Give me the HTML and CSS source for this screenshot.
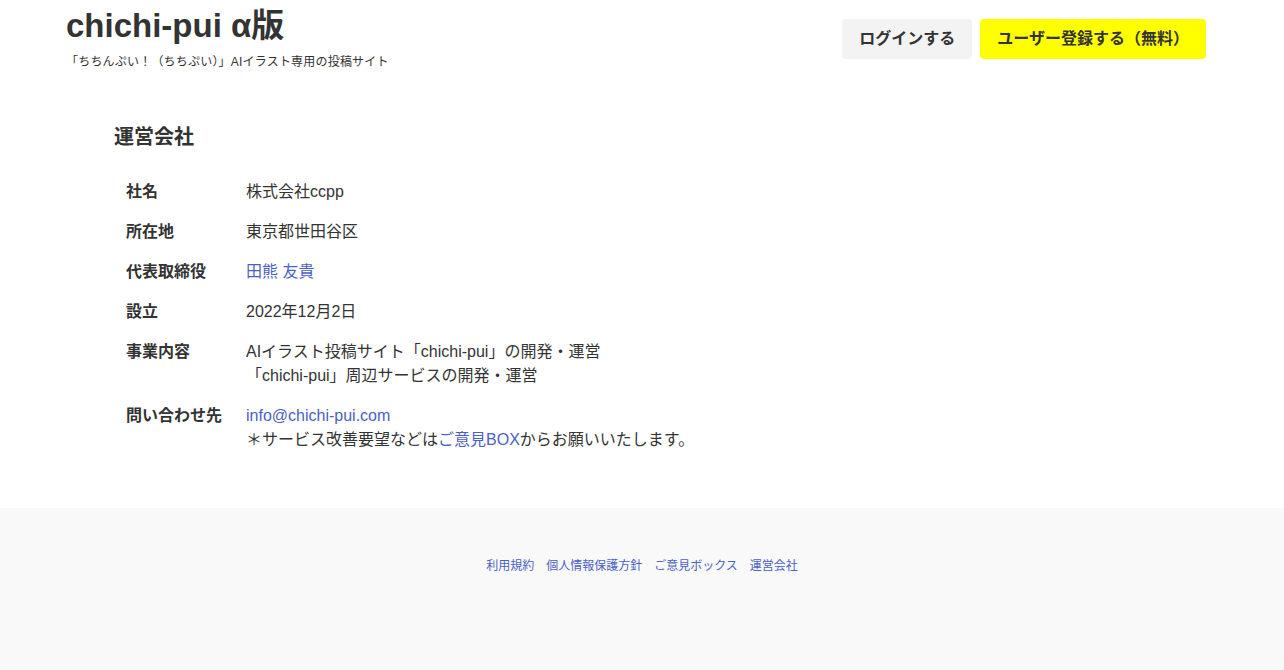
FILE: index.html
```html
<!DOCTYPE html>
<html lang="ja">
<head>
    <meta charset="UTF-8">
    <meta name="viewport" content="width=device-width, initial-scale=1.0">
    <title>運営会社 | chichi-pui</title>
    <link rel="stylesheet" href="styles.css">
</head>
<body>

<header class="site-header">
    <div class="brand">
        <a class="logo" href="#">chichi-pui α版</a>
        <p class="tagline">「ちちんぷい！（ちちぷい）」AIイラスト専用の投稿サイト</p>
    </div>
    <div class="header-actions">
        <a class="btn btn-login" href="#">ログインする</a>
        <a class="btn btn-register" href="#">ユーザー登録する（無料）</a>
    </div>
</header>

<main class="company">
    <h2>運営会社</h2>
    <table class="company-table">
        <tr>
            <th>社名</th>
            <td>株式会社ccpp</td>
        </tr>
        <tr>
            <th>所在地</th>
            <td>東京都世田谷区</td>
        </tr>
        <tr>
            <th>代表取締役</th>
            <td><a href="#">田熊 友貴</a></td>
        </tr>
        <tr>
            <th>設立</th>
            <td>2022年12月2日</td>
        </tr>
        <tr>
            <th>事業内容</th>
            <td>AIイラスト投稿サイト「chichi-pui」の開発・運営<br>「chichi-pui」周辺サービスの開発・運営</td>
        </tr>
        <tr>
            <th>問い合わせ先</th>
            <td><a href="#">info@chichi-pui.com</a><br>＊サービス改善要望などは<a href="#">ご意見BOX</a>からお願いいたします。</td>
        </tr>
    </table>
</main>

<footer class="site-footer">
    <nav class="footer-links">
        <a href="#">利用規約</a>
        <a href="#">個人情報保護方針</a>
        <a href="#">ご意見ボックス</a>
        <a href="#">運営会社</a>
    </nav>
</footer>

</body>
</html>
```

FILE: styles.css
```css
body {
    font-family: "Liberation Sans", Arial, "Noto Sans CJK JP", sans-serif;
    margin: 0;
    color: #333;
    background: #fff;
}
a {
    color: #4b5fc6;
    text-decoration: none;
}
.site-header {
    max-width: 1152px;
    margin: 0 auto;
    padding: 0 12px 0 0;
    box-sizing: border-box;
    display: flex;
    justify-content: space-between;
    align-items: flex-start;
}
.brand {
    padding-top: 6px;
}
.logo {
    display: block;
    font-size: 33px;
    font-weight: bold;
    line-height: 40px;
    color: #333;
}
.tagline {
    margin: 8px 0 0;
    font-size: 12px;
    line-height: 16px;
    color: #333;
    letter-spacing: 0.2px;
}
.header-actions {
    display: flex;
    gap: 8px;
    padding-top: 19px;
}
.btn {
    display: block;
    height: 40px;
    line-height: 40px;
    padding: 0 17px;
    border-radius: 4px;
    font-size: 16px;
    font-weight: bold;
    color: #333;
}
.btn-login {
    background: #f3f3f3;
}
.btn-register {
    background: #ffff00;
}
.company {
    max-width: 1152px;
    margin: 0 auto;
    padding: 51px 48px 48px;
    box-sizing: border-box;
}
.company h2 {
    font-size: 20px;
    line-height: 32px;
    margin: 0 0 19px;
}
.company-table {
    border-collapse: collapse;
    font-size: 16px;
    line-height: 24px;
}
.company-table th {
    width: 96px;
    text-align: left;
    vertical-align: top;
    padding: 8px 12px;
    font-weight: bold;
}
.company-table td {
    vertical-align: top;
    padding: 8px 12px;
}
.site-footer {
    background: #f9f9f9;
    height: 162px;
    padding-top: 49px;
    box-sizing: border-box;
}
.footer-links {
    display: flex;
    justify-content: center;
    gap: 12px;
    font-size: 12px;
    line-height: 18px;
}
```
